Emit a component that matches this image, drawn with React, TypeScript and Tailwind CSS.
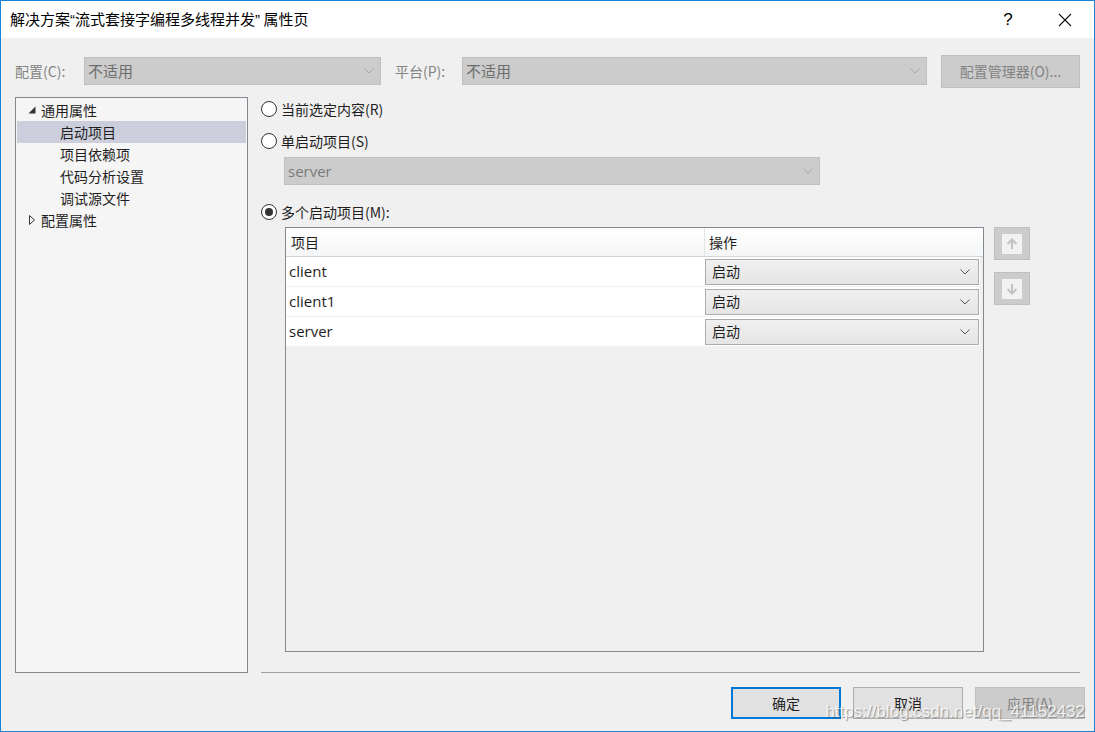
import React from 'react';

const font = { fontFamily: '"Noto Sans CJK SC", "Noto Sans", sans-serif' };
const latin = { fontFamily: '"Liberation Sans", sans-serif' };

const Chevron = ({ color = '#a0a0a0' }: { color?: string }) => (
  <svg width="10" height="6" viewBox="0 0 10 6" fill="none">
    <path d="M0.5 0.5 L5 5 L9.5 0.5" stroke={color} strokeWidth="1" />
  </svg>
);

const Radio = ({ checked, label }: { checked?: boolean; label: string }) => (
  <div className="flex items-center h-[22px]">
    <div className="w-[16px] h-[16px] rounded-full border border-[#333333] bg-white flex items-center justify-center">
      {checked && <div className="w-[8px] h-[8px] rounded-full bg-[#333333]" />}
    </div>
    <span className="ml-[4px] text-[14px] text-[#1e1e1e]">{label}</span>
  </div>
);

const Select = ({ value }: { value: string }) => (
  <div className="h-[28px] bg-[#cccccc] border border-[#bfbfbf] flex items-center justify-between pl-[3px] pr-[6px]">
    <span className="text-[15px] text-[#6d6d6d]">{value}</span>
    <Chevron color="#a8a8a8" />
  </div>
);

const tree = [
  { label: '通用属性', level: 0, icon: 'open' },
  { label: '启动项目', level: 1, selected: true },
  { label: '项目依赖项', level: 1 },
  { label: '代码分析设置', level: 1 },
  { label: '调试源文件', level: 1 },
  { label: '配置属性', level: 0, icon: 'closed' },
];

const projects = ['client', 'client1', 'server'];

const ArrowBtn = ({ down }: { down?: boolean }) => (
  <div className="w-[36px] h-[33px] bg-[#cccccc] border border-[#bfbfbf] flex items-center justify-center">
    <div className="w-[20px] h-[20px] bg-[#f2f2f2] flex items-center justify-center">
      <svg width="12" height="12" viewBox="0 0 12 12" fill="none" stroke="#c2c2c2" strokeWidth="2">
        {down ? (
          <>
            <path d="M6 1 V10" />
            <path d="M1.5 6 L6 10.5 L10.5 6" />
          </>
        ) : (
          <>
            <path d="M6 11 V2" />
            <path d="M1.5 6 L6 1.5 L10.5 6" />
          </>
        )}
      </svg>
    </div>
  </div>
);

export default function App() {
  return (
    <div
      className="relative w-[1095px] h-[732px] border border-[#1883d7] bg-[#f0f0f0] flex flex-col text-[#1e1e1e] overflow-hidden"
      style={font}
    >
      {/* Title bar */}
      <div className="h-[37px] bg-white flex items-center pl-[9px] shrink-0">
        <span className="text-[15px] text-black">
          解决方案<span style={latin}>“</span>流式套接字编程多线程并发<span style={latin}>”</span> 属性页
        </span>
        <div className="ml-auto flex items-center">
          <span className="text-[17px] text-black w-[58px] text-center" style={latin}>?</span>
          <div className="w-[56px] flex justify-center mr-[1px]">
            <svg width="14" height="14" viewBox="0 0 14 14" stroke="#111" strokeWidth="1.1">
              <path d="M1 1 L13 13 M13 1 L1 13" />
            </svg>
          </div>
        </div>
      </div>

      {/* Configuration row */}
      <div className="flex items-center h-[34px] mt-[16px] pl-[14px] pr-[14px] shrink-0">
        <span className="text-[14px] text-[#838383] w-[69px]">配置(C):</span>
        <div className="w-[297px]"><Select value="不适用" /></div>
        <span className="text-[14px] text-[#838383] ml-[14px] w-[67px]">平台(P):</span>
        <div className="w-[465px]"><Select value="不适用" /></div>
        <div className="ml-auto w-[139px] h-[33px] bg-[#cccccc] border border-[#bfbfbf] flex items-center justify-center text-[14px] text-[#838383]">
          配置管理器(O)...
        </div>
      </div>

      {/* Main */}
      <div className="flex mt-[9px] pl-[14px] h-[576px] shrink-0">
        {/* Tree */}
        <div className="w-[233px] h-full border border-[#828790] bg-[#f5f5f5] p-[1px]">
          {tree.map((t) => (
            <div
              key={t.label}
              className={`h-[22px] flex items-center text-[14px] ${t.selected ? 'bg-[#cccedb]' : ''}`}
            >
              <div className="w-[24px] flex justify-end pr-[5px]">
                {t.icon === 'open' && (
                  <svg width="8" height="8" viewBox="0 0 8 8">
                    <path d="M7.5 0.5 L7.5 7.5 L0.5 7.5 Z" fill="#333" />
                  </svg>
                )}
                {t.icon === 'closed' && (
                  <svg width="8" height="10" viewBox="0 0 8 10">
                    <path d="M1.5 0.5 L6.5 5 L1.5 9.5 Z" fill="none" stroke="#333" strokeWidth="1" />
                  </svg>
                )}
              </div>
              <span className={t.level === 1 ? 'ml-[19px]' : ''}>{t.label}</span>
            </div>
          ))}
        </div>

        {/* Right panel */}
        <div className="flex-1 ml-[13px] mr-[14px] flex flex-col">
          <div className="mt-[1px]"><Radio label="当前选定内容(R)" /></div>
          <div className="mt-[10px]"><Radio label="单启动项目(S)" /></div>
          <div className="mt-[5px] ml-[23px] w-[536px]">
            <div className="h-[28px] bg-[#cccccc] border border-[#bfbfbf] flex items-center justify-between pl-[3px] pr-[6px]">
              <span className="text-[15px] text-[#7a7a7a]" style={{ fontFamily: '"Open Sans", sans-serif' }}>server</span>
              <Chevron color="#a8a8a8" />
            </div>
          </div>
          <div className="mt-[16px]"><Radio checked label="多个启动项目(M):" /></div>

          <div className="flex mt-[4px] ml-[24px]">
            {/* Table */}
            <div className="w-[699px] h-[425px] border border-[#828790] bg-[#f0f0f0] flex flex-col">
              <div className="h-[29px] flex bg-gradient-to-b from-white to-[#f5f6f7] border-b border-[#d5d5d5] text-[14px]">
                <div className="w-[419px] pl-[5px] flex items-center border-r border-[#e5e5e5]">项目</div>
                <div className="flex-1 pl-[4px] flex items-center">操作</div>
                <div className="w-[3px]" />
              </div>
              {projects.map((p) => (
                <div key={p} className="h-[30px] flex bg-white border-b border-[#f0f0f0] mr-[3px]">
                  <div className="w-[419px] pl-[3px] flex items-center text-[15px]" style={{ fontFamily: '"Open Sans", sans-serif' }}>
                    {p}
                  </div>
                  <div className="flex-1 flex items-center pr-[1px]">
                    <div className="w-full h-[26px] border border-[#acacac] bg-gradient-to-b from-[#f0f0f0] to-[#e5e5e5] flex items-center justify-between pl-[6px] pr-[8px] text-[14px]">
                      <span>启动</span>
                      <Chevron color="#555" />
                    </div>
                  </div>
                </div>
              ))}
            </div>

            {/* Move buttons */}
            <div className="ml-[10px] flex flex-col gap-[12px]">
              <ArrowBtn />
              <ArrowBtn down />
            </div>
          </div>

          <div className="mt-auto h-[1px] bg-[#a0a0a0]" />
        </div>
      </div>

      {/* Dialog buttons */}
      <div className="flex justify-end gap-[12px] mt-[14px] pr-[9px] shrink-0">
        <div className="w-[110px] h-[32px] border-2 border-[#0078d7] bg-[#e1e1e1] flex items-center justify-center text-[14px]">确定</div>
        <div className="w-[110px] h-[32px] border border-[#adadad] bg-[#e1e1e1] flex items-center justify-center text-[14px]">取消</div>
        <div className="w-[110px] h-[32px] border border-[#bfbfbf] bg-[#cccccc] flex items-center justify-center text-[14px] text-[#838383]">应用(A)</div>
      </div>

      {/* Watermark */}
      <div
        className="absolute right-[9px] bottom-[7px] text-[17px] text-white/80 pointer-events-none"
        style={{ ...latin, textShadow: '1px 1px 1px rgba(90,90,90,0.6)' }}
      >
        https://blog.csdn.net/qq_41152432
      </div>
    </div>
  );
}
